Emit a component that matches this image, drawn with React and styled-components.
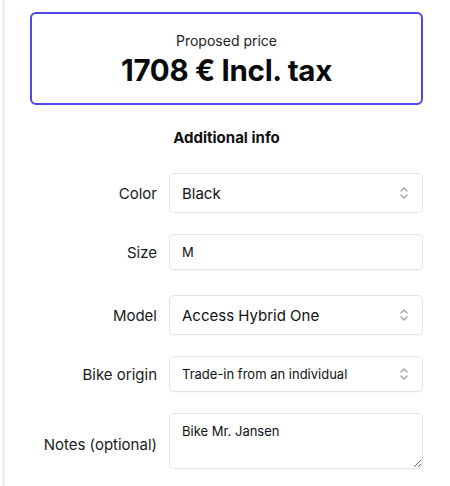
import React from 'react';
import styled, { createGlobalStyle } from 'styled-components';

const GlobalStyle = createGlobalStyle`
  html, body {
    margin: 0;
    padding: 0;
    background: #ffffff;
  }
  body {
    font-family: Inter, "Noto Sans", "Liberation Sans", sans-serif;
    color: #111111;
  }
`;

const Page = styled.div`
  margin-left: 2px;
  border-left: 3px solid #efefef;
  min-height: 486px;
  box-sizing: border-box;
  padding: 12px 27px 0 25px;
`;

const PriceBox = styled.div`
  border: 2px solid #4f46f0;
  border-radius: 6px;
  height: 93px;
  box-sizing: border-box;
  display: flex;
  flex-direction: column;
  align-items: center;
  justify-content: center;
  gap: 4px;
`;

const PriceLabel = styled.div`
  font-size: 14px;
  color: #222;
  line-height: 18px;
`;

const PriceValue = styled.div`
  font-size: 29.5px;
  font-weight: 700;
  letter-spacing: -0.3px;
  line-height: 32px;
  color: #0a0a0a;
`;

const SectionTitle = styled.div`
  text-align: center;
  font-size: 15px;
  font-weight: 700;
  margin: 24px 0 26px;
  line-height: 18px;
`;

const Form = styled.div`
  display: flex;
  flex-direction: column;
`;

const Row = styled.label`
  display: grid;
  grid-template-columns: 127px 1fr;
  column-gap: 12px;
  align-items: center;
  margin-bottom: ${p => p.$gap}px;
`;

const Label = styled.span`
  text-align: right;
  font-size: 15px;
  color: #1a1a1a;
  padding-top: ${p => p.$offset || 0}px;
`;

const fieldBase = `
  box-sizing: border-box;
  width: 100%;
  border: 1px solid #e3e3e6;
  border-radius: 5px;
  background: #fff;
  color: #111;
  font-family: Inter, "Noto Sans", "Liberation Sans", sans-serif;
  box-shadow: 0 1px 1px rgba(0,0,0,0.03);
  outline: none;
`;

const SelectWrap = styled.div`
  position: relative;
`;

const Select = styled.select`
  ${fieldBase}
  appearance: none;
  height: ${p => (p.$large ? 40 : 36)}px;
  font-size: ${p => (p.$large ? 15 : 13)}px;
  padding: 0 34px 0 12px;
`;

const Chevron = styled.svg`
  position: absolute;
  right: 14px;
  top: 50%;
  transform: translateY(-50%);
  pointer-events: none;
`;

const Input = styled.input`
  ${fieldBase}
  height: 36px;
  font-size: 13px;
  padding: 0 12px;
`;

const TextArea = styled.textarea`
  ${fieldBase}
  height: 56px;
  font-size: 13px;
  padding: 9px 12px;
  resize: vertical;
  display: block;
`;

const UpDown = () => (
  <Chevron width="10" height="16" viewBox="0 0 10 16" fill="none">
    <path d="M2 6 L5 3 L8 6" stroke="#9ca3af" strokeWidth="1.4" strokeLinecap="round" strokeLinejoin="round" />
    <path d="M2 10 L5 13 L8 10" stroke="#9ca3af" strokeWidth="1.4" strokeLinecap="round" strokeLinejoin="round" />
  </Chevron>
);

const SelectField = ({ value, options, large }) => (
  <SelectWrap>
    <Select $large={large} defaultValue={value}>
      {options.map(o => <option key={o}>{o}</option>)}
    </Select>
    <UpDown />
  </SelectWrap>
);

export default function App() {
  return (
    <>
      <GlobalStyle />
      <Page>
        <PriceBox>
          <PriceLabel>Proposed price</PriceLabel>
          <PriceValue>1708 € Incl. tax</PriceValue>
        </PriceBox>
        <SectionTitle>Additional info</SectionTitle>
        <Form>
          <Row $gap={21}>
            <Label>Color</Label>
            <SelectField large value="Black" options={['Black', 'White', 'Grey']} />
          </Row>
          <Row $gap={25}>
            <Label>Size</Label>
            <Input defaultValue="M" />
          </Row>
          <Row $gap={21}>
            <Label>Model</Label>
            <SelectField large value="Access Hybrid One" options={['Access Hybrid One', 'Access Hybrid Two']} />
          </Row>
          <Row $gap={21}>
            <Label>Bike origin</Label>
            <SelectField value="Trade-in from an individual" options={['Trade-in from an individual', 'Trade-in from a shop']} />
          </Row>
          <Row $gap={0}>
            <Label $offset={6}>Notes (optional)</Label>
            <TextArea defaultValue="Bike Mr. Jansen" />
          </Row>
        </Form>
      </Page>
    </>
  );
}
